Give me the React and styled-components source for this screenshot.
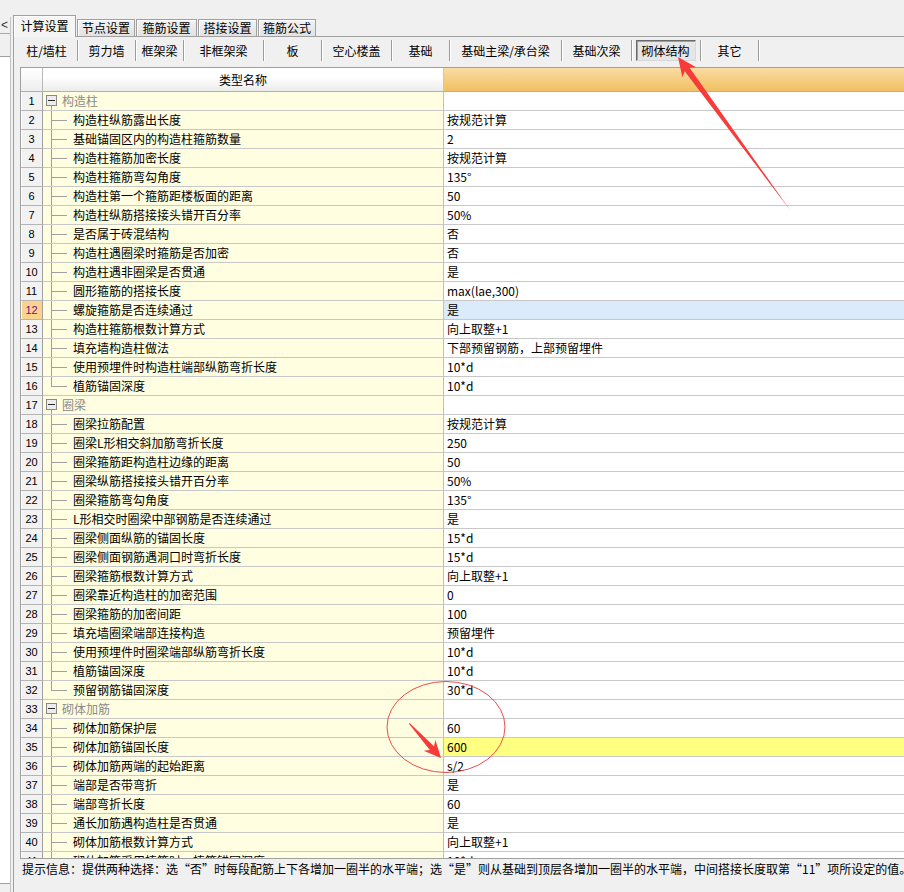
import React from "react";
import styled, { createGlobalStyle } from "styled-components";

const GlobalStyle = createGlobalStyle`
  html, body {
    margin: 0;
    padding: 0;
    background: #f0f0f0;
  }
  body {
    font-family: "Noto Sans CJK SC", "Liberation Sans", sans-serif;
    font-size: 12px;
    color: #000;
  }
`;

const topTabs = [
  { label: "计算设置", w: 63, active: true },
  { label: "节点设置", w: 58 },
  { label: "箍筋设置", w: 61 },
  { label: "搭接设置", w: 59 },
  { label: "箍筋公式", w: 58 },
];

const subTabs = [
  { label: "柱/墙柱", w: 62 },
  { label: "剪力墙", w: 58 },
  { label: "框架梁", w: 48 },
  { label: "非框架梁", w: 80 },
  { label: "板", w: 58 },
  { label: "空心楼盖", w: 70 },
  { label: "基础", w: 58 },
  { label: "基础主梁/承台梁", w: 112 },
  { label: "基础次梁", w: 70 },
  { label: "砌体结构", w: 69, pressed: true },
  { label: "其它", w: 58 },
];

// kind: group | item | last
const rows = [
  { kind: "group", name: "构造柱" },
  { name: "构造柱纵筋露出长度", value: "按规范计算" },
  { name: "基础锚固区内的构造柱箍筋数量", value: "2" },
  { name: "构造柱箍筋加密长度", value: "按规范计算" },
  { name: "构造柱箍筋弯勾角度", value: "135°" },
  { name: "构造柱第一个箍筋距楼板面的距离", value: "50" },
  { name: "构造柱纵筋搭接接头错开百分率", value: "50%" },
  { name: "是否属于砖混结构", value: "否" },
  { name: "构造柱遇圈梁时箍筋是否加密", value: "否" },
  { name: "构造柱遇非圈梁是否贯通", value: "是" },
  { name: "圆形箍筋的搭接长度", value: "max(lae,300)" },
  { name: "螺旋箍筋是否连续通过", value: "是", selected: true },
  { name: "构造柱箍筋根数计算方式", value: "向上取整+1" },
  { name: "填充墙构造柱做法", value: "下部预留钢筋，上部预留埋件" },
  { name: "使用预埋件时构造柱端部纵筋弯折长度", value: "10*d" },
  { kind: "last", name: "植筋锚固深度", value: "10*d" },
  { kind: "group", name: "圈梁" },
  { name: "圈梁拉筋配置", value: "按规范计算" },
  { name: "圈梁L形相交斜加筋弯折长度", value: "250" },
  { name: "圈梁箍筋距构造柱边缘的距离", value: "50" },
  { name: "圈梁纵筋搭接接头错开百分率", value: "50%" },
  { name: "圈梁箍筋弯勾角度", value: "135°" },
  { name: "L形相交时圈梁中部钢筋是否连续通过", value: "是" },
  { name: "圈梁侧面纵筋的锚固长度", value: "15*d" },
  { name: "圈梁侧面钢筋遇洞口时弯折长度", value: "15*d" },
  { name: "圈梁箍筋根数计算方式", value: "向上取整+1" },
  { name: "圈梁靠近构造柱的加密范围", value: "0" },
  { name: "圈梁箍筋的加密间距", value: "100" },
  { name: "填充墙圈梁端部连接构造", value: "预留埋件" },
  { name: "使用预埋件时圈梁端部纵筋弯折长度", value: "10*d" },
  { name: "植筋锚固深度", value: "10*d" },
  { kind: "last", name: "预留钢筋锚固深度", value: "30*d" },
  { kind: "group", name: "砌体加筋" },
  { name: "砌体加筋保护层", value: "60" },
  { name: "砌体加筋锚固长度", value: "600", marked: true },
  { name: "砌体加筋两端的起始距离", value: "s/2" },
  { name: "端部是否带弯折", value: "是" },
  { name: "端部弯折长度", value: "60" },
  { name: "通长加筋遇构造柱是否贯通", value: "是" },
  { name: "砌体加筋根数计算方式", value: "向上取整+1" },
  { name: "砌体加筋采用植筋时，植筋锚固深度", value: "10*d" },
];

const TreeGlyph = ({ kind }) => {
  if (kind === "group") {
    return (
      <TreeSvg width="17" height="18" viewBox="0 0 17 18">
        <line x1="8.5" y1="14" x2="8.5" y2="18" stroke="#a0a0a0" />
        <rect x="3.5" y="3.5" width="10" height="10" fill="#ececec" stroke="#8a8a8a" />
        <line x1="5" y1="8.5" x2="12" y2="8.5" stroke="#2a2a2a" />
      </TreeSvg>
    );
  }
  return (
    <TreeSvg width="30" height="18" viewBox="0 0 30 18">
      <line x1="8.5" y1="0" x2="8.5" y2={kind === "last" ? 9.5 : 18} stroke="#a0a0a0" />
      <line x1="8.5" y1="9.5" x2="24" y2="9.5" stroke="#a0a0a0" />
    </TreeSvg>
  );
};

const Annotations = () => (
  <Overlay width="904" height="892" viewBox="0 0 904 892">
    <g transform="translate(678 57) rotate(-126.2)" fill="#f83a3a">
      <polygon points="0,0 -19,-8.5 -15.5,-3 -190,0 -15.5,3 -19,8.5" />
    </g>
    <ellipse cx="446" cy="727" rx="59" ry="45.5" fill="none" stroke="#ee4a4a" strokeWidth="1" />
    <g transform="translate(441 758) rotate(47.6)" fill="#f83a3a">
      <polygon points="0,0 -17,-8 -13.5,-2.8 -47,-0.5 -47,0.5 -13.5,2.8 -17,8" />
    </g>
  </Overlay>
);

const App = () => {
  return (
    <>
      <GlobalStyle />
      <Screen lang="zh-CN">
        <LeftPane>
          <CollapseBtn>&lt;</CollapseBtn>
          <ListBox />
        </LeftPane>

        <Main>
          <TabStrip>
            {topTabs.map((t) => (
              <Tab key={t.label} $w={t.w} $active={t.active}>
                {t.label}
              </Tab>
            ))}
          </TabStrip>

          <TabPanel>
            <SubTabBar>
              {subTabs.map((t) => (
                <SubTab key={t.label} $w={t.w}>
                  {t.pressed ? <Pressed>{t.label}</Pressed> : t.label}
                </SubTab>
              ))}
            </SubTabBar>

            <Grid>
              <HeaderRow>
                <HeadNum />
                <HeadName>类型名称</HeadName>
                <HeadValue />
              </HeaderRow>
              {rows.map((r, i) => {
                const kind = r.kind || "item";
                return (
                  <Row key={i}>
                    <NumCell $selected={r.selected}>{i + 1}</NumCell>
                    <NameCell $group={kind === "group"}>
                      <TreeGlyph kind={kind} />
                      <span>{r.name}</span>
                    </NameCell>
                    <ValueCell $bg={r.selected ? "#dcebfb" : r.marked ? "#ffff80" : "#fff"}>
                      {r.value}
                    </ValueCell>
                  </Row>
                );
              })}
            </Grid>

            <HintBar>
              提示信息：提供两种选择：选“否”时每段配筋上下各增加一圈半的水平端；选“是”则从基础到顶层各增加一圈半的水平端，中间搭接长度取第“11”项所设定的值。
            </HintBar>
          </TabPanel>
        </Main>

        <Annotations />
      </Screen>
    </>
  );
};

const Screen = styled.div`
  position: relative;
  display: flex;
  width: 904px;
  height: 892px;
  overflow: hidden;
  background: #f0f0f0;
`;

const LeftPane = styled.div`
  display: flex;
  flex-direction: column;
  width: 10px;
  margin-top: 17px;
  border-right: 1px solid #c4c4c4;
`;

const CollapseBtn = styled.div`
  height: 16px;
  border-bottom: 1px solid #a8a8a8;
  font-family: "Liberation Sans", sans-serif;
  font-size: 12px;
  line-height: 16px;
  text-align: right;
  padding-right: 2px;
  color: #333;
  overflow: hidden;
`;

const ListBox = styled.div`
  flex: 1;
  margin-top: 22px;
  margin-bottom: 8px;
  background: #fff;
  border-top: 1px solid #a0a0a0;
  border-bottom: 1px solid #a0a0a0;
`;

const Main = styled.div`
  flex: 1;
  display: flex;
  flex-direction: column;
  margin-left: 2px;
  min-width: 0;
`;

const TabStrip = styled.div`
  display: flex;
  align-items: flex-end;
  gap: 1px;
  height: 21px;
  margin-top: 15px;
  border-bottom: 1px solid #a0a0a0;
`;

const Tab = styled.div`
  width: ${(p) => p.$w}px;
  box-sizing: border-box;
  height: ${(p) => (p.$active ? 22 : 17)}px;
  margin-bottom: ${(p) => (p.$active ? -1 : 0)}px;
  border: 1px solid #a0a0a0;
  border-bottom: none;
  background: ${(p) =>
    p.$active ? "#f5f5f5" : "linear-gradient(#f2f2f2, #e2e2e2)"};
  box-shadow: inset 1px 1px 0 #fff;
  font-size: 12px;
  line-height: ${(p) => (p.$active ? 19 : 16)}px;
  text-align: center;
  white-space: nowrap;
`;

const TabPanel = styled.div`
  flex: 1;
  display: flex;
  flex-direction: column;
  border-left: 1px solid #a0a0a0;
  min-width: 0;
`;

const SubTabBar = styled.div`
  display: flex;
  box-sizing: border-box;
  height: 24px;
  padding: 3px 0 0 2px;
`;

const SubTab = styled.div`
  flex: none;
  display: flex;
  align-items: center;
  justify-content: center;
  box-sizing: border-box;
  width: ${(p) => p.$w}px;
  height: 21px;
  border-right: 1px solid #9c9c9c;
  box-shadow: 1px 0 0 #fff;
  font-size: 12px;
  white-space: nowrap;
`;

const Pressed = styled.div`
  display: flex;
  align-items: center;
  justify-content: center;
  box-sizing: border-box;
  width: 60px;
  height: 21px;
  margin-right: 1px;
  border: 1px solid;
  border-color: #6a6a6a #d8d8d8 #d8d8d8 #6a6a6a;
  background: #e6e6e6;
  box-shadow: inset 1px 1px 0 #a0a0a0;
`;

const Grid = styled.div`
  box-sizing: border-box;
  width: 900px;
  height: 792px;
  margin: 6px 0 0 6px;
  border: 1px solid #a0a0a0;
  border-right: none;
  background: #fff;
  overflow: hidden;
`;

const HeaderRow = styled.div`
  display: grid;
  grid-template-columns: 22px 401px 1fr;
  height: 24px;
  box-sizing: border-box;
  border-bottom: 1px solid #b0b0b0;
`;

const HeadNum = styled.div`
  border-right: 1px solid #b8b8b8;
  background: linear-gradient(#ffffff, #eeeeee);
`;

const HeadName = styled.div`
  display: flex;
  align-items: center;
  justify-content: center;
  border-right: 1px solid #c8c8c8;
  background: linear-gradient(#ffffff 40%, #ececec);
  font-size: 12px;
`;

const HeadValue = styled.div`
  background: linear-gradient(#fbdca4, #f0c061);
`;

const Row = styled.div`
  display: grid;
  grid-template-columns: 22px 401px 1fr;
  height: 19px;
`;

const NumCell = styled.div`
  box-sizing: border-box;
  border-right: 1px solid #a0a0a0;
  border-bottom: 1px solid #b4b4b4;
  background: ${(p) => (p.$selected ? "#fbd28e" : "#f2f2f2")};
  box-shadow: inset 1px 0 0 #fff;
  color: ${(p) => (p.$selected ? "#7a0a8a" : "#000")};
  font-family: "Liberation Sans", sans-serif;
  font-size: 11px;
  line-height: 18px;
  text-align: center;
`;

const NameCell = styled.div`
  display: flex;
  align-items: center;
  box-sizing: border-box;
  border-right: 1px solid #c0c0c0;
  border-bottom: 1px solid #c8c8c8;
  background: #fffee1;
  font-size: 12px;
  line-height: 18px;
  white-space: nowrap;
  overflow: hidden;
  color: ${(p) => (p.$group ? "#8a8a8a" : "#000")};

  span {
    margin-left: ${(p) => (p.$group ? 2 : 0)}px;
  }
`;

const TreeSvg = styled.svg`
  display: block;
  flex: none;
  shape-rendering: crispEdges;
`;

const ValueCell = styled.div`
  box-sizing: border-box;
  padding-left: 3px;
  border-bottom: 1px solid #c8c8c8;
  background: ${(p) => p.$bg};
  font-size: 12px;
  line-height: 18px;
  white-space: nowrap;
`;

const HintBar = styled.div`
  padding: 2px 0 0 8px;
  font-size: 12px;
  line-height: 16px;
  white-space: nowrap;
`;

const Overlay = styled.svg`
  position: absolute;
  top: 0;
  left: 0;
  pointer-events: none;
`;

export default App;
